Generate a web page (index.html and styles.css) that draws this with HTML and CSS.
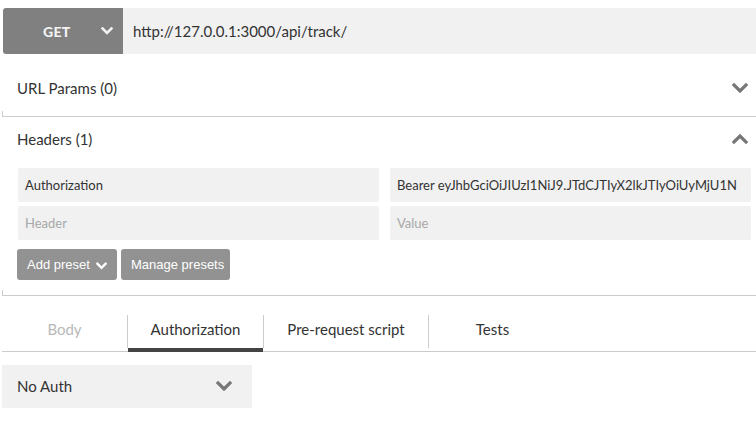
FILE: index.html
```html
<!DOCTYPE html>
<html>
<head>
<meta charset="utf-8">
<link rel="stylesheet" href="styles.css">
</head>
<body>
<div class="url-bar">
  <div class="method">
    <span class="method-name">GET</span>
    <svg class="chev chev-sm" viewBox="0 0 12 8"><polyline points="1.5,1.5 6,6 10.5,1.5"/></svg>
  </div>
  <div class="url">http://127.0.0.1:3000/api/track/</div>
</div>

<div class="section first">
  <div class="section-head">
    <span>URL Params (0)</span>
    <svg class="chev" viewBox="0 0 16 10"><polyline points="2,2 8,8 14,2"/></svg>
  </div>
</div>
<div class="divider"></div>

<div class="section">
  <div class="section-head">
    <span>Headers (1)</span>
    <svg class="chev" viewBox="0 0 16 10"><polyline points="2,8 8,2 14,8"/></svg>
  </div>
  <div class="kv-grid">
    <div class="field">Authorization</div>
    <div class="field">Bearer eyJhbGciOiJIUzI1NiJ9.JTdCJTIyX2lkJTIyOiUyMjU1N</div>
    <div class="field placeholder">Header</div>
    <div class="field placeholder">Value</div>
  </div>
  <div class="buttons">
    <div class="btn btn-add">Add preset <svg class="chev chev-btn" viewBox="0 0 12 8"><polyline points="1.5,1.5 6,6 10.5,1.5"/></svg></div>
    <div class="btn btn-manage">Manage presets</div>
  </div>
</div>
<div class="divider second"></div>

<div class="tabs">
  <div class="tab tab-body muted">Body</div>
  <div class="tab-sep"></div>
  <div class="tab tab-auth active">Authorization</div>
  <div class="tab-sep"></div>
  <div class="tab tab-pre">Pre-request script</div>
  <div class="tab-sep"></div>
  <div class="tab tab-tests">Tests</div>
</div>

<div class="select">
  <span>No Auth</span>
  <svg class="chev" viewBox="0 0 16 10"><polyline points="2,2 8,8 14,2"/></svg>
</div>
</body>
</html>
```

FILE: styles.css
```css
* { box-sizing: border-box; }
html, body { margin: 0; padding: 0; background: #fff; }
body {
  width: 756px;
  font-family: Lato, "Open Sans", sans-serif;
  color: #333;
  font-size: 15px;
  overflow: hidden;
}
.chev {
  width: 16px;
  height: 10px;
  fill: none;
  stroke: #777;
  stroke-width: 3.2;
  stroke-linecap: square;
  stroke-linejoin: miter;
}
.url-bar {
  display: flex;
  margin: 8px 0 0 3px;
  height: 46px;
}
.method {
  width: 120px;
  background: #808080;
  border-radius: 3px 0 0 3px;
  display: flex;
  align-items: center;
  padding-left: 40px;
  color: #f2f2f2;
}
.method-name {
  font-weight: 900;
  font-size: 14px;
  letter-spacing: 0.3px;
}
.chev-sm {
  width: 12px;
  height: 8px;
  stroke: #f2f2f2;
  stroke-width: 2.6;
  margin-left: 30px;
}
.url {
  flex: 1;
  background: #f1f1f1;
  display: flex;
  align-items: center;
  padding-left: 10px;
  font-size: 15px;
  color: #333;
}
.section { padding-left: 17px; padding-right: 8px; }
.section.first { padding-top: 16px; margin-bottom: 5px; }
.section-head {
  height: 36px;
  display: flex;
  align-items: center;
  justify-content: space-between;
  font-size: 15px;
}
.divider {
  height: 6px;
  margin-left: 2px;
  border-left: 1px solid #ccc;
  border-bottom: 1px solid #ccc;
}
.section:not(.first) { padding-top: 4px; }
.kv-grid {
  display: grid;
  grid-template-columns: 361px 361px;
  column-gap: 11px;
  row-gap: 4px;
  margin-top: 11px;
  margin-left: 1px;
}
.field {
  height: 34px;
  background: #f1f1f1;
  border-radius: 2px;
  padding: 0 7px;
  display: flex;
  align-items: center;
  font-size: 13px;
  white-space: nowrap;
  overflow: hidden;
  color: #333;
}
.field.placeholder { color: #a8a8a8; }
.buttons {
  display: flex;
  gap: 4px;
  margin-top: 9px;
  margin-bottom: 10px;
}
.btn {
  height: 31px;
  background: #929292;
  border-radius: 3px;
  color: #fff;
  font-family: "Liberation Sans", Arial, sans-serif;
  font-size: 13px;
  white-space: nowrap;
  display: flex;
  align-items: center;
}
.btn-add { width: 100px; padding-left: 10px; }
.btn-manage { width: 109px; padding-left: 10px; }
.chev-btn {
  width: 11px;
  height: 8px;
  stroke: #fff;
  stroke-width: 2.6;
  margin-left: 6px;
  margin-top: 2px;
}
.tabs {
  display: flex;
  margin-left: 2px;
  padding-top: 19px;
  border-bottom: 1px solid #ccc;
}
.tab {
  height: 37px;
  padding-bottom: 6px;
  display: flex;
  align-items: center;
  justify-content: center;
  font-size: 15px;
  color: #333;
  border-bottom: 4px solid transparent;
  margin-bottom: -1px;
}
.tab.muted { color: #b8b8b8; }
.tab.active { border-bottom-color: #444; }
.tab-body { width: 125px; }
.tab-auth { width: 135px; }
.tab-pre { width: 164px; }
.tab-tests { width: 127px; }
.tab-sep {
  width: 1px;
  height: 33px;
  background: #ccc;
  align-self: flex-start;
}
.select {
  margin: 13px 0 0 2px;
  width: 250px;
  height: 43px;
  background: #f1f1f1;
  display: flex;
  align-items: center;
  justify-content: space-between;
  padding: 0 20px 2px 15px;
  font-size: 15px;
}
```
